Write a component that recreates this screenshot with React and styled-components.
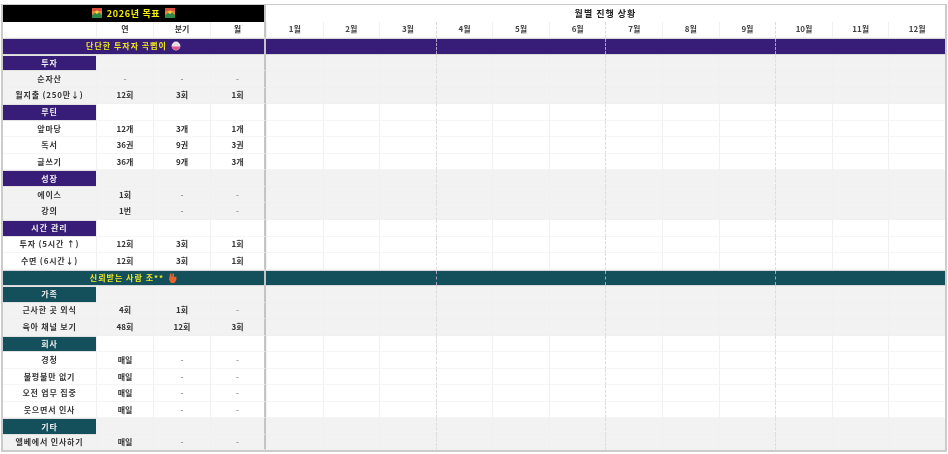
import React from "react";
import styled, { createGlobalStyle } from "styled-components";

const MONTHS = ["1월", "2월", "3월", "4월", "5월", "6월", "7월", "8월", "9월", "10월", "11월", "12월"];

const SECTIONS = [
	{
		title: "단단한 투자자 곡뻡이",
		icon: "ball",
		color: "#371c78",
		groups: [
			{
				name: "투자",
				shaded: true,
				rows: [
					["순자산", "-", "-", "-"],
					["월지출 (250만↓)", "12회", "3회", "1회"],
				],
			},
			{
				name: "루틴",
				rows: [
					["앞마당", "12개", "3개", "1개"],
					["독서", "36권", "9권", "3권"],
					["글쓰기", "36개", "9개", "3개"],
				],
			},
			{
				name: "성장",
				shaded: true,
				rows: [
					["에이스", "1회", "-", "-"],
					["강의", "1번", "-", "-"],
				],
			},
			{
				name: "시간 관리",
				rows: [
					["투자 (5시간 ↑)", "12회", "3회", "1회"],
					["수면 (6시간↓)", "12회", "3회", "1회"],
				],
			},
		],
	},
	{
		title: "신뢰받는 사람 조**",
		icon: "hand",
		color: "#144f5c",
		groups: [
			{
				name: "가족",
				shaded: true,
				rows: [
					["근사한 곳 외식", "4회", "1회", "-"],
					["육아 채널 보기", "48회", "12회", "3회"],
				],
			},
			{
				name: "회사",
				rows: [
					["경청", "매일", "-", "-"],
					["불평불만 없기", "매일", "-", "-"],
					["오전 업무 집중", "매일", "-", "-"],
					["웃으면서 인사", "매일", "-", "-"],
				],
			},
			{
				name: "기타",
				shaded: true,
				rows: [["엘베에서 인사하기", "매일", "-", "-"]],
			},
		],
	},
];

const SunriseIcon = () => (
	<svg width="10" height="10" viewBox="0 0 10 10">
		<rect width="10" height="10" fill="#e8853a" />
		<rect width="10" height="3" fill="#d9503f" />
		<circle cx="5" cy="4.4" r="1.8" fill="#f4d13f" />
		<path d="M0 7.2 L3 4.8 L5 6 L7 4.6 L10 7.2 V10 H0 Z" fill="#2f8a4a" />
	</svg>
);

const BallIcon = () => (
	<svg width="10" height="10" viewBox="0 0 10 10">
		<circle cx="5" cy="5" r="4.4" fill="#e6e0e6" />
		<path d="M0.7 5.6 A4.4 4.4 0 0 0 9.3 5.6 Z" fill="#e0558f" />
	</svg>
);

const HandIcon = () => (
	<svg width="9" height="10" viewBox="0 0 9 10">
		<path d="M2 0.5 h1.6 v3 h0.8 v-3 h1.6 v3.5 L8.4 3.4 V7 L6.4 10 H3 L1 6.5 Z" fill="#e8622c" />
	</svg>
);

const MonthCells = ({ shaded }) =>
	MONTHS.map((month, i) => <MonthCell key={month} $shaded={shaded} $quarter={i % 3 === 0 && i > 0} />);

const GoalCells = ({ values, shaded }) =>
	values.map((value, i) => (
		<GoalCell key={i} $shaded={shaded} $muted={value === "-"} $last={i === values.length - 1}>
			{value}
		</GoalCell>
	));

const App = () => {
	return (
		<Page>
			<GlobalStyle />
			<Sheet>
				<Row>
					<TitleCell>
						<SunriseIcon />
						2026년 목표
						<SunriseIcon />
					</TitleCell>
					<ProgressTitle>월별 진행 상황</ProgressTitle>
				</Row>
				<Row>
					<LabelCell />
					<GoalCells values={["연", "분기", "월"]} />
					{MONTHS.map((month, i) => (
						<MonthCell key={month} $quarter={i % 3 === 0 && i > 0}>
							{month}
						</MonthCell>
					))}
				</Row>
				{SECTIONS.map((section) => (
					<React.Fragment key={section.title}>
						<Row>
							<BannerTitle $color={section.color}>
								{section.title}
								{section.icon === "ball" ? <BallIcon /> : <HandIcon />}
							</BannerTitle>
							<BannerBar $color={section.color}>
								{MONTHS.map((month, i) => (
									<BannerSlot key={month} $quarter={i % 3 === 0 && i > 0} />
								))}
							</BannerBar>
						</Row>
						{section.groups.map((group) => (
							<React.Fragment key={group.name}>
								<Row>
									<GroupCell $color={section.color}>{group.name}</GroupCell>
									<GoalCells values={["", "", ""]} shaded={group.shaded} />
									<MonthCells shaded={group.shaded} />
								</Row>
								{group.rows.map(([label, ...values]) => (
									<Row key={label}>
										<LabelCell $shaded={group.shaded}>{label}</LabelCell>
										<GoalCells values={values} shaded={group.shaded} />
										<MonthCells shaded={group.shaded} />
									</Row>
								))}
							</React.Fragment>
						))}
					</React.Fragment>
				))}
			</Sheet>
		</Page>
	);
};

const GlobalStyle = createGlobalStyle`
	html, body {
		margin: 0;
		padding: 0;
		background: #fff;
	}
	body {
		font-family: "Noto Sans CJK KR", "Noto Sans", sans-serif;
	}
`;

const Page = styled.div`
	width: 948px;
	height: 454px;
	padding: 4px 1px 1px 1px;
	box-sizing: border-box;
	overflow: hidden;
`;

const Sheet = styled.div`
	width: 946px;
	height: 448px;
	box-sizing: border-box;
	border: 2px solid #cbcbcb;
	border-top-width: 1.5px;
	display: grid;
	grid-template-rows: repeat(26, 1fr) 15px;
	background: #fff;
	filter: blur(0.5px);
`;

const Row = styled.div`
	display: grid;
	grid-template-columns: 93px 57px 57px 56px repeat(12, 1fr);
	min-height: 0;
	font-size: 8px;
	font-weight: 700;
	line-height: 1;
	color: #333;
`;

const Cell = styled.div`
	display: flex;
	align-items: center;
	justify-content: center;
	white-space: nowrap;
	box-sizing: border-box;
	min-width: 0;
`;

const TitleCell = styled(Cell)`
	grid-column: 1 / 5;
	background: #000;
	color: #f5f000;
	gap: 5px;
	border-right: 2px solid #c4c4c4;
	font-size: 9px;
	letter-spacing: 0.7px;
`;

const ProgressTitle = styled(Cell)`
	grid-column: 5 / 17;
	background: #fff;
	color: #222;
	font-size: 9px;
	letter-spacing: 1px;
`;

const LabelCell = styled(Cell)`
	background: ${(p) => (p.$shaded ? "#f2f2f2" : "#fff")};
	border-bottom: 1px solid ${(p) => (p.$shaded ? "#f0f0f0" : "#f5f5f5")};
	letter-spacing: 0.8px;
`;

const GoalCell = styled(Cell)`
	background: ${(p) => (p.$shaded ? "#f2f2f2" : "#fff")};
	border-left: 1px solid #f0f0f0;
	border-bottom: 1px solid ${(p) => (p.$shaded ? "#f0f0f0" : "#f5f5f5")};
	border-right: ${(p) => (p.$last ? "2px solid #c4c4c4" : "none")};
	color: ${(p) => (p.$muted ? "#999" : "#333")};
`;

const MonthCell = styled(Cell)`
	background: ${(p) => (p.$shaded ? "#f2f2f2" : "#fff")};
	border-left: 1px ${(p) => (p.$quarter ? "dashed #dcdcdc" : "solid #f0f0f0")};
	border-bottom: 1px solid ${(p) => (p.$shaded ? "#f0f0f0" : "#f5f5f5")};
	color: #444;
`;

const BannerTitle = styled(Cell)`
	grid-column: 1 / 5;
	background: ${(p) => p.$color};
	color: #f0e81e;
	gap: 4px;
	border-right: 2px solid #c4c4c4;
	border-top: 1px solid #d8d8d8;
	border-bottom: 1px solid #d8d8d8;
	letter-spacing: 1px;
`;

const BannerBar = styled.div`
	grid-column: 5 / 17;
	display: grid;
	grid-template-columns: repeat(12, 1fr);
	background: ${(p) => p.$color};
	border-top: 1px solid #d8d8d8;
	border-bottom: 1px solid #d8d8d8;
`;

const BannerSlot = styled.div`
	border-left: 1px ${(p) => (p.$quarter ? "dashed #a9a0c4" : "solid transparent")};
`;

const GroupCell = styled(Cell)`
	background: ${(p) => p.$color};
	color: #f2f2f2;
	border-bottom: 1px solid #e2e2e2;
	border-top: 1px solid #e2e2e2;
	letter-spacing: 1px;
`;

export default App;
